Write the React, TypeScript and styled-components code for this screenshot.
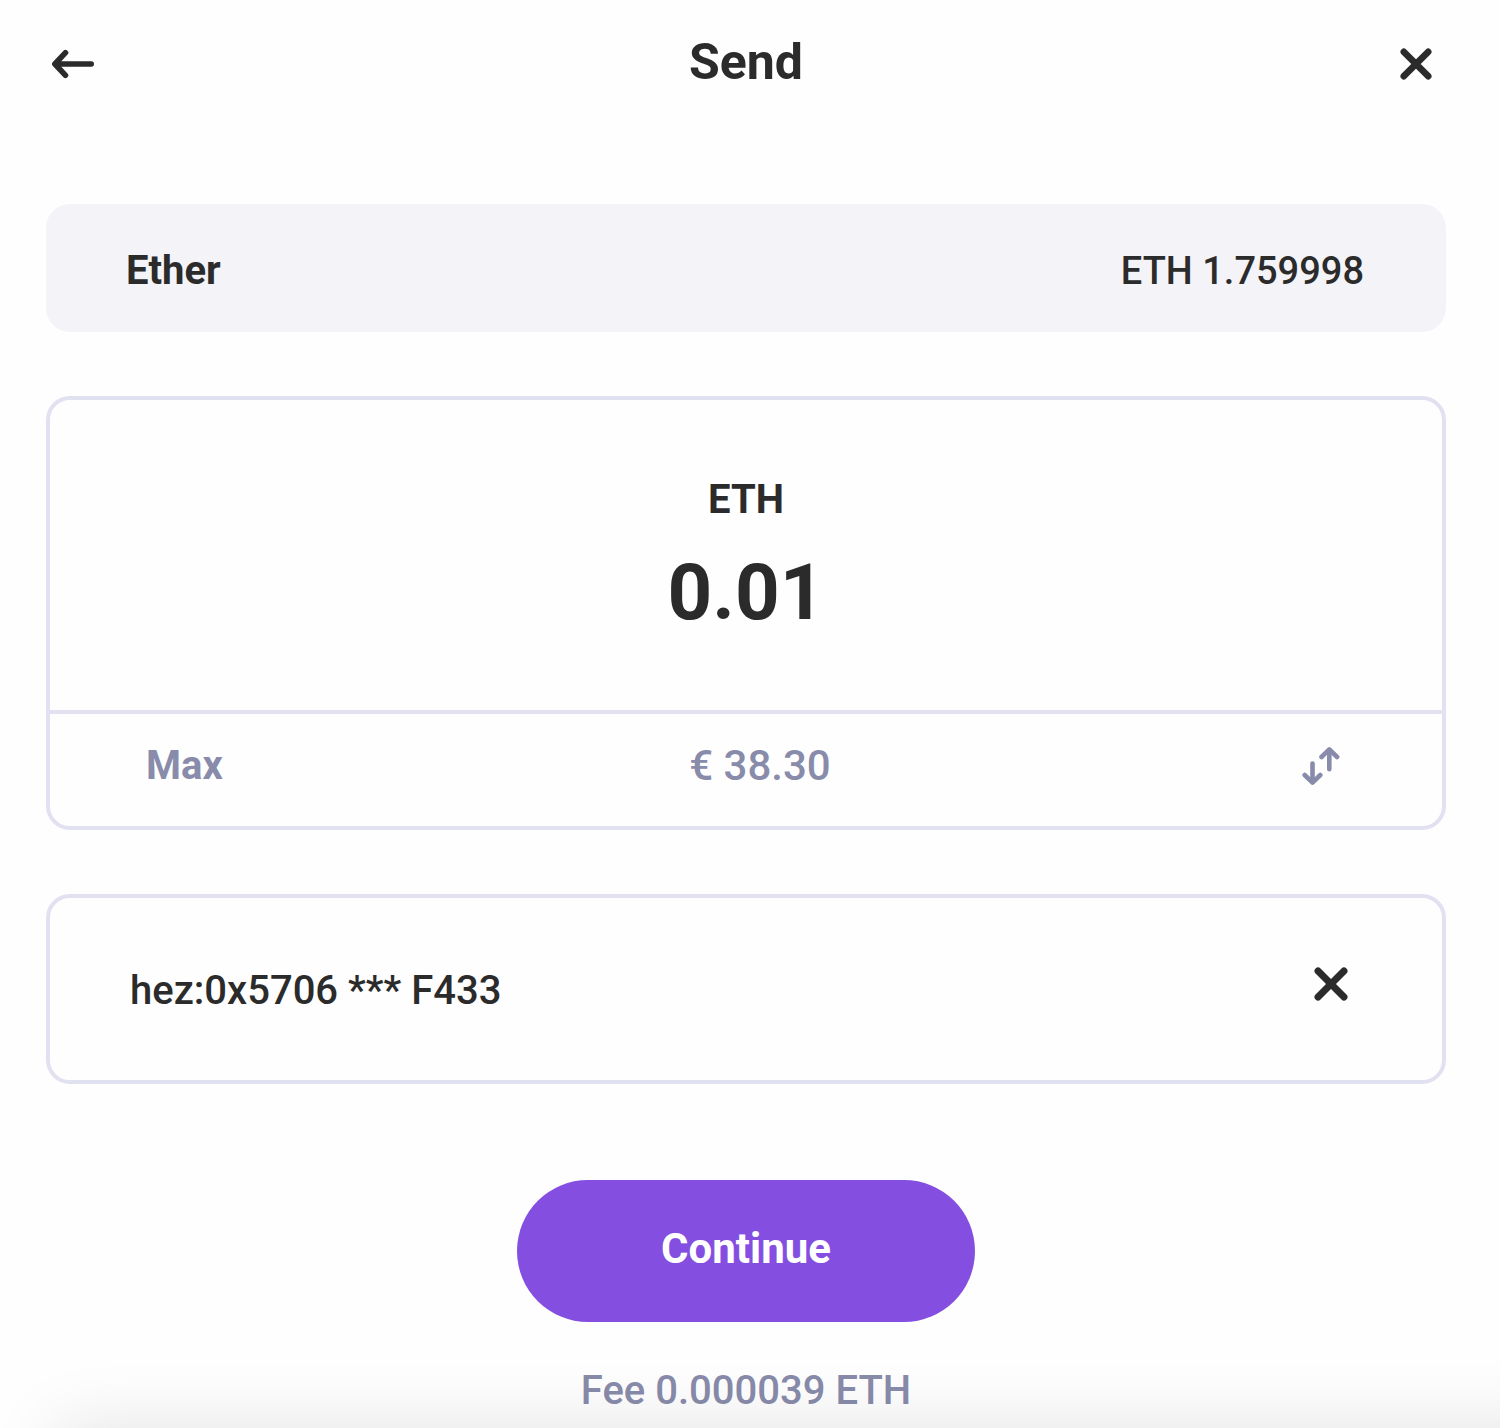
import React, { useState } from "react";
import styled, { createGlobalStyle } from "styled-components";

const ink = "#2b2b2b";
const muted = "#888baa";
const line = "#e2e1f2";

const GlobalStyle = createGlobalStyle`
  *, *::before, *::after { box-sizing: border-box; }
  body {
    margin: 0;
    background: #fefefe;
    color: ${ink};
    font-family: Roboto, "Liberation Sans", sans-serif;
    font-size: 40px;
    line-height: 48px;
  }
  button, input { font: inherit; color: inherit; }
`;

const Page = styled.main`
  display: flex;
  flex-direction: column;
  padding: 32px 54px 0 46px;
`;

const Header = styled.header`
  display: grid;
  grid-template-columns: 64px 1fr 64px;
  align-items: center;
  margin-bottom: 112px;
`;

const Title = styled.h1`
  margin: 0;
  font-size: 50px;
  line-height: 60px;
  font-weight: 700;
  text-align: center;
`;

const IconButton = styled.button<{ $end?: boolean }>`
  display: flex;
  flex: none;
  align-items: center;
  justify-content: ${(p) => (p.$end ? "flex-end" : "flex-start")};
  padding: ${(p) => (p.$end ? "4px 14px 0 0" : "4px 6px 0")};
  border: 0;
  background: none;
  cursor: pointer;
  svg {
    display: block;
    fill: none;
    stroke: currentColor;
    stroke-linecap: round;
    stroke-linejoin: round;
  }
`;

const Token = styled.section`
  display: flex;
  justify-content: space-between;
  padding: 43px 82px 37px 80px;
  border-radius: 24px;
  background: #f3f3f8;
  margin-bottom: 64px;
`;

const TokenName = styled.span`
  font-weight: 700;
`;

const Balance = styled.span`
  font-size: 38px;
  font-weight: 500;
`;

const Card = styled.section`
  border: 4px solid ${line};
  border-radius: 24px;
  margin-bottom: 64px;
`;

const AmountArea = styled.div`
  display: flex;
  flex-direction: column;
  align-items: center;
  padding: 76px 32px 70px;
  border-bottom: 4px solid ${line};
`;

const Currency = styled.label`
  font-weight: 700;
  margin-bottom: 22px;
`;

const AmountInput = styled.input`
  width: 100%;
  height: 94px;
  padding: 0;
  border: 0;
  outline: 0;
  background: none;
  font-size: 78px;
  line-height: 94px;
  font-weight: 700;
  text-align: center;
`;

const ConvertRow = styled.div`
  display: grid;
  grid-template-columns: 1fr auto 1fr;
  align-items: center;
  padding: 28px 96px 36px;
  color: ${muted};
`;

const MaxButton = styled.button`
  justify-self: start;
  padding: 0;
  border: 0;
  background: none;
  font-weight: 700;
  cursor: pointer;
`;

const Fiat = styled.span`
  padding-left: 28px;
  font-size: 42px;
  font-weight: 500;
`;

const SwapButton = styled(IconButton)`
  justify-self: end;
  padding-top: 0;
`;

const Recipient = styled(Card)`
  display: flex;
  align-items: center;
  gap: 32px;
  padding: 64px 90px 66px 80px;
  margin-bottom: 96px;
`;

const RecipientInput = styled.input`
  flex: 1;
  min-width: 0;
  height: 52px;
  padding: 4px 0 0;
  border: 0;
  outline: 0;
  background: none;
  font-weight: 500;
`;

const ClearButton = styled(IconButton)`
  padding: 0 4px 8px 0;
`;

const Submit = styled.button`
  align-self: center;
  padding: 45px 144px 49px;
  border: 0;
  border-radius: 72px;
  background: #844fe0;
  color: #fff;
  font-size: 42px;
  font-weight: 700;
  cursor: pointer;
`;

const Fee = styled.p`
  margin: 45px 0 0;
  color: ${muted};
  font-weight: 500;
  text-align: center;
`;

const BottomShade = styled.div`
  position: fixed;
  top: 100%;
  left: 56px;
  right: -100px;
  height: 200px;
  box-shadow: 0 0 72px rgba(0, 0, 0, 0.11);
  pointer-events: none;
`;

const ArrowIcon = () => (
  <svg width="42" height="30" viewBox="0 0 42 30" strokeWidth="5.6" aria-hidden="true">
    <path d="M13.5 3.7 2.9 15l10.6 11.3M4 15h35.2" />
  </svg>
);

const CloseIcon = ({ size }: { size: number }) => (
  <svg width={size} height={size} viewBox="0 0 32 32" strokeWidth="6.6" aria-hidden="true">
    <path d="m3.8 3.8 24.4 24.4M28.2 3.8 3.8 28.2" />
  </svg>
);

const SwapIcon = () => (
  <svg width="38" height="40" viewBox="0 0 38 40" strokeWidth="4.6" aria-hidden="true">
    <path d="M10.5 17.6v18M2.7 29l7.8 7.6L18.3 29M27.3 23.3v-18M19.5 11l7.8-7.6 7.8 7.6" />
  </svg>
);

export default function App() {
  const [amount, setAmount] = useState("0.01");
  const [recipient, setRecipient] = useState("hez:0x5706 *** F433");

  return (
    <>
      <GlobalStyle />
      <Page>
        <Header>
          <IconButton type="button" aria-label="Back">
            <ArrowIcon />
          </IconButton>
          <Title>Send</Title>
          <IconButton type="button" aria-label="Close" $end>
            <CloseIcon size={32} />
          </IconButton>
        </Header>

        <Token>
          <TokenName>Ether</TokenName>
          <Balance>ETH 1.759998</Balance>
        </Token>

        <Card>
          <AmountArea>
            <Currency htmlFor="amount">ETH</Currency>
            <AmountInput
              id="amount"
              inputMode="decimal"
              value={amount}
              onChange={(e) => setAmount(e.target.value)}
            />
          </AmountArea>
          <ConvertRow>
            <MaxButton type="button">Max</MaxButton>
            <Fiat>€ 38.30</Fiat>
            <SwapButton type="button" aria-label="Swap currency">
              <SwapIcon />
            </SwapButton>
          </ConvertRow>
        </Card>

        <Recipient>
          <RecipientInput
            aria-label="Recipient address"
            value={recipient}
            onChange={(e) => setRecipient(e.target.value)}
          />
          <ClearButton type="button" aria-label="Clear address" onClick={() => setRecipient("")}>
            <CloseIcon size={34} />
          </ClearButton>
        </Recipient>

        <Submit type="button">Continue</Submit>
        <Fee>Fee 0.000039 ETH</Fee>
      </Page>
      <BottomShade />
    </>
  );
}
